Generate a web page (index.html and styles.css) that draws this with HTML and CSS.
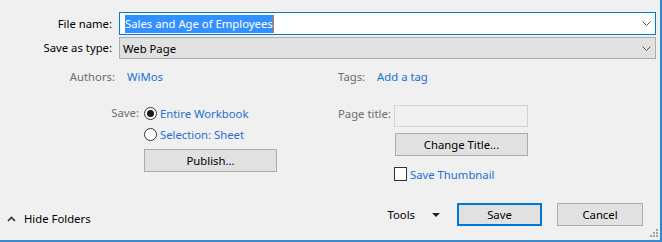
FILE: index.html
```
<!DOCTYPE html>
<html lang="en">
<head>
  <meta charset="UTF-8">
  <title>Save As</title>
  <link rel="stylesheet" href="styles.css">
</head>
<body>
  <div class="dialog">
    <div class="fields">
      <div class="field-row">
        <span class="label">File name:</span>
        <div class="combo combo-edit">
          <span class="selected">Sales and Age of Employees</span><span class="caret"></span>
          <svg class="chevron" width="9" height="5" viewBox="0 0 9 5"><polyline points="0.5,0.5 4.5,4.5 8.5,0.5" fill="none" stroke="#555" stroke-width="1"/></svg>
        </div>
      </div>
      <div class="field-row">
        <span class="label">Save as type:</span>
        <div class="combo combo-list">
          <span>Web Page</span>
          <svg class="chevron" width="9" height="5" viewBox="0 0 9 5"><polyline points="0.5,0.5 4.5,4.5 8.5,0.5" fill="none" stroke="#555" stroke-width="1"/></svg>
        </div>
      </div>
    </div>

    <div class="meta-row">
      <div class="meta meta-authors">
        <span class="meta-label">Authors:</span>
        <span class="link">WiMos</span>
      </div>
      <div class="meta">
        <span class="meta-label">Tags:</span>
        <span class="link">Add a tag</span>
      </div>
    </div>

    <div class="options">
      <div class="opt-group opt-save">
        <span class="meta-label opt-label">Save:</span>
        <div class="opt-controls">
          <div class="choice"><span class="radio checked"></span><span class="link">Entire Workbook</span></div>
          <div class="choice"><span class="radio"></span><span class="link">Selection: Sheet</span></div>
          <button class="btn btn-wide">Publish...</button>
        </div>
      </div>
      <div class="opt-group opt-title">
        <span class="meta-label title-label">Page title:</span>
        <div class="opt-controls">
          <div class="title-input"></div>
          <button class="btn btn-wide">Change Title...</button>
          <div class="choice thumb"><span class="checkbox"></span><span class="link">Save Thumbnail</span></div>
        </div>
      </div>
    </div>

    <div class="footer">
      <div class="hide-folders">
        <svg width="9" height="6" viewBox="0 0 9 6"><polyline points="1,5 4.5,1.5 8,5" fill="none" stroke="#333" stroke-width="1.6"/></svg>
        <span>Hide Folders</span>
      </div>
      <div class="actions">
        <div class="tools">Tools <span class="tri"></span></div>
        <button class="btn btn-action btn-default">Save</button>
        <button class="btn btn-action">Cancel</button>
      </div>
    </div>

    <svg class="gripper" width="8" height="8" viewBox="0 0 8 8" fill="#a0a0a0">
      <rect x="6" y="0" width="2" height="2"/>
      <rect x="3" y="3" width="2" height="2"/><rect x="6" y="3" width="2" height="2"/>
      <rect x="0" y="6" width="2" height="2"/><rect x="3" y="6" width="2" height="2"/><rect x="6" y="6" width="2" height="2"/>
    </svg>
  </div>
</body>
</html>
```

FILE: styles.css
```
* {
  box-sizing: border-box;
}

body, html {
  margin: 0;
  padding: 0;
  width: 662px;
  height: 242px;
  background: #f0f0f0;
  font-family: "Noto Sans", "Open Sans", sans-serif;
  font-size: 11.3px;
  color: #000;
  overflow: hidden;
}

.dialog {
  position: relative;
  width: 662px;
  height: 242px;
  padding-top: 12px;
  border-right: 2px solid #2b87d8;
  border-bottom: 2px solid #3a8ad0;
  display: flex;
  flex-direction: column;
}

.fields {
  display: flex;
  flex-direction: column;
  gap: 2px;
}

.field-row {
  display: flex;
  align-items: center;
}

.label {
  width: 113px;
  text-align: right;
  padding-right: 1px;
  margin-right: 6px;
  line-height: 16px;
}

.combo {
  width: 537px;
  display: flex;
  align-items: center;
  padding: 0 4px 0 4px;
}

.combo-edit {
  height: 23px;
  background: #fff;
  border: 1px solid #0078d7;
  padding-left: 5px;
}

.combo-list {
  height: 22px;
  background: #e1e1e1;
  border: 1px solid #adadad;
  padding-left: 3px;
}

.selected {
  background: #3390ff;
  color: #fff;
  line-height: 18px;
}

.caret {
  width: 1px;
  height: 18px;
  background: #e0701a;
}

.chevron {
  margin-left: auto;
  margin-right: 0;
}

.meta-row {
  display: flex;
  margin-top: 10px;
  line-height: 16px;
}

.meta {
  display: flex;
}

.meta-authors {
  width: 338px;
}

.meta-authors .meta-label {
  width: 115px;
  text-align: right;
  margin-right: 12px;
}

.meta-label {
  color: #6d6d6d;
}

.meta .meta-label {
  margin-right: 12px;
}

.link {
  color: #1f6fd1;
}

.options {
  display: flex;
  margin-top: 20px;
}

.opt-group {
  display: flex;
  align-items: flex-start;
}

.opt-save {
  width: 338px;
}

.opt-label {
  width: 139px;
  text-align: right;
  margin-right: 5px;
  line-height: 16px;
}

.title-label {
  width: 50px;
  margin-right: 6px;
  line-height: 16px;
  margin-top: 1px;
  white-space: nowrap;
}

.opt-controls {
  display: flex;
  flex-direction: column;
}

.choice {
  display: flex;
  align-items: center;
  height: 16px;
  margin-bottom: 5px;
}

.choice .link {
  margin-left: 3px;
}

.radio {
  width: 13px;
  height: 13px;
  border: 1px solid #333;
  border-radius: 50%;
  background: #fff;
  display: flex;
  align-items: center;
  justify-content: center;
}

.radio.checked::after {
  content: "";
  width: 7px;
  height: 7px;
  border-radius: 50%;
  background: #1a1a1a;
}

.checkbox {
  width: 13px;
  height: 14px;
  border: 1px solid #333;
  background: #fff;
}

.btn {
  font-family: inherit;
  font-size: 11.3px;
  color: #000;
  background: #e1e1e1;
  border: 1px solid #adadad;
  padding: 0;
  margin: 0;
}

.btn-wide {
  width: 133px;
  height: 23px;
  margin-top: 2px;
}

.title-input {
  width: 134px;
  height: 22px;
  border: 1px solid #d4d4d4;
  background: #f0f0f0;
  margin-top: 0;
}

.opt-title .btn-wide {
  margin-top: 6px;
  margin-left: 1px;
}

.thumb {
  margin-top: 10px;
}

.footer {
  margin-top: auto;
  padding-bottom: 14px;
  display: flex;
  justify-content: space-between;
  align-items: flex-end;
}

.hide-folders {
  display: flex;
  align-items: center;
  gap: 8px;
  padding-left: 7px;
  margin-bottom: -1px;
  line-height: 16px;
}

.hide-folders svg {
  margin-bottom: 1px;
}

.actions {
  display: flex;
  align-items: center;
  padding-right: 17px;
}

.tools {
  display: flex;
  align-items: center;
  margin-right: 17px;
}

.tri {
  margin-left: 17px;
  width: 0;
  height: 0;
  border-left: 4px solid transparent;
  border-right: 4px solid transparent;
  border-top: 4px solid #222;
}

.btn-action {
  width: 86px;
  height: 23px;
}

.btn-default {
  width: 85px;
  border: 2px solid #0078d7;
  margin-right: 15px;
}

.gripper {
  position: absolute;
  right: 2px;
  bottom: 3px;
}
```
